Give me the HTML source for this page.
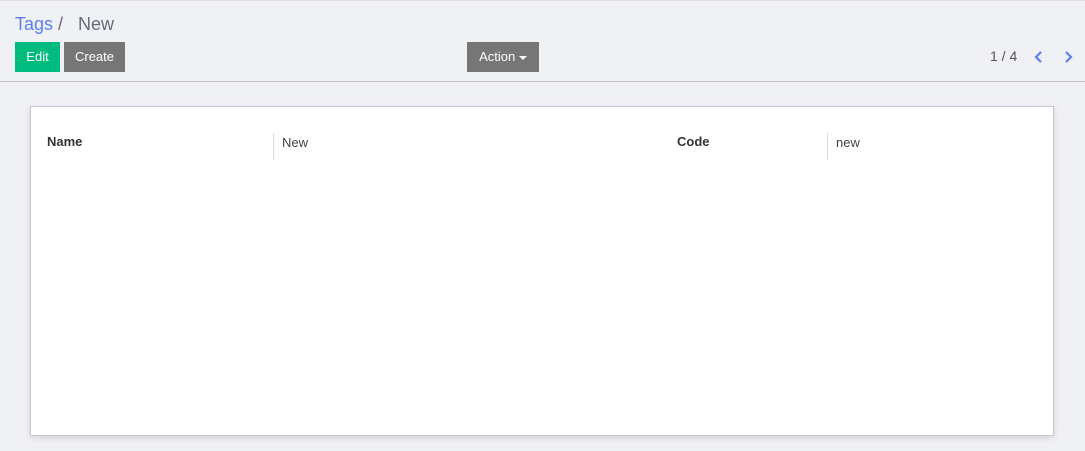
<!DOCTYPE html>
<html><head><style>
*{box-sizing:border-box;margin:0;padding:0}
body{width:1085px;height:451px;background:#f0f1f5;font-family:"Liberation Sans",sans-serif;position:relative;overflow:hidden}
.top{position:absolute;left:0;top:0;width:1085px;height:82px;border-top:1px solid #e2e2e6;border-bottom:1px solid #bdbbcc}
.bc{position:absolute;left:15px;top:13px;font-size:18px;color:#666b78}
.bc a{color:#5b7ff0}
.btn{position:absolute;top:41px;height:30px;color:#fff;font-size:13px;line-height:30px;text-align:center}
.pg{position:absolute;left:990px;top:47px;font-size:14px;color:#555}
.sheet{position:absolute;left:30px;top:106px;width:1024px;height:330px;background:#fff;border:1px solid #c9c7d6;box-shadow:0 2px 6px rgba(0,0,0,.12)}
.lbl{position:absolute;top:27px;font-size:13px;font-weight:bold;color:#333}
.val{position:absolute;top:26px;height:27px;border-left:1px solid #ddd;padding-left:8px;padding-top:2px;font-size:13px;color:#444}
</style></head><body>
<div class="top">
<div class="bc"><a>Tags</a> /&nbsp;&nbsp; New</div>
<div class="btn" style="left:15px;width:45px;background:#00bb7e">Edit</div>
<div class="btn" style="left:64px;width:61px;background:#767676">Create</div>
<div class="btn" style="left:467px;width:72px;background:#767676">Action <span style="display:inline-block;border-left:4px solid transparent;border-right:4px solid transparent;border-top:4px solid #fff;vertical-align:middle"></span></div>
<div class="pg">1 / 4</div>
<svg style="position:absolute;left:1033px;top:49px" width="12" height="14" viewBox="0 0 12 14"><path d="M8 2L3 7l5 5" fill="none" stroke="#5b7ff0" stroke-width="2.2"/></svg>
<svg style="position:absolute;left:1062px;top:49px" width="12" height="14" viewBox="0 0 12 14"><path d="M4 2l5 5-5 5" fill="none" stroke="#5b7ff0" stroke-width="2.2"/></svg>
</div>
<div class="sheet">
<div class="lbl" style="left:16px">Name</div>
<div class="val" style="left:242px">New</div>
<div class="lbl" style="left:646px">Code</div>
<div class="val" style="left:796px">new</div>
</div>
</body></html>
